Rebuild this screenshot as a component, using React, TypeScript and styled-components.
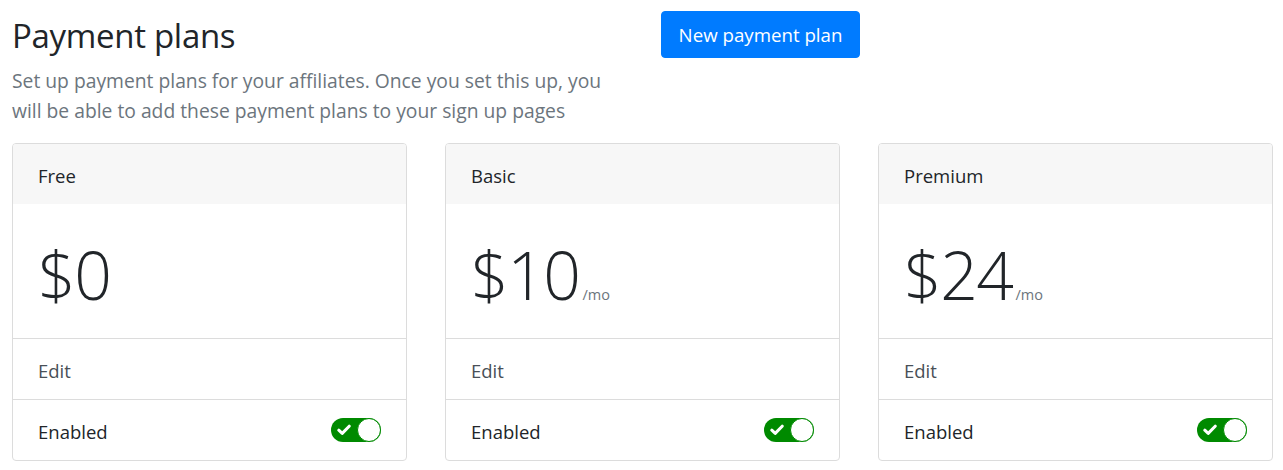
import React from "react";
import styled, { createGlobalStyle } from "styled-components";

const Global = createGlobalStyle`
  html, body { margin: 0; padding: 0; background: #fff; }
  body { font-family: "Open Sans", "Noto Sans", sans-serif; color: #212529; }
  * { box-sizing: border-box; }
`;

const Page = styled.div`
  padding: 11px 11px 0 12px;
`;

const Header = styled.div`
  display: grid;
  grid-template-columns: 629px 1fr;
  align-items: start;
`;

const Intro = styled.div``;

const Title = styled.h1`
  margin: 3px 0 9px;
  font-size: 33px;
  font-weight: 400;
  line-height: 43px;
  color: #212529;
  letter-spacing: -0.3px;
`;

const Lead = styled.p`
  margin: 0;
  font-size: 19.3px;
  line-height: 30px;
  color: #6c757d;
  max-width: 605px;
`;

const Actions = styled.div`
  padding-left: 20px;
`;

const PrimaryButton = styled.button`
  font-family: inherit;
  font-size: 18.7px;
  line-height: 29px;
  padding: 0;
  white-space: nowrap;
  width: 199px;
  height: 47px;
  color: #fff;
  background: #007bff;
  border: 1px solid #007bff;
  border-radius: 4px;
  cursor: pointer;
`;

const Cards = styled.div`
  margin-top: 17px;
  display: grid;
  grid-template-columns: repeat(3, 395px);
  column-gap: 38px;
`;

const Card = styled.div`
  border: 1px solid #dcdcdc;
  border-radius: 4px;
  overflow: hidden;
  background: #fff;
`;

const CardHeader = styled.div`
  height: 60px;
  display: flex;
  align-items: center;
  padding: 2px 25px 0;
  background: #f7f7f7;
  font-size: 18.5px;
  color: #212529;
`;

const PriceArea = styled.div`
  height: 135px;
  display: flex;
  align-items: center;
  padding: 0 25px 0 25px;
  border-bottom: 1px solid #dcdcdc;
`;

const Price = styled.span`
  font-family: "Open Sans", sans-serif;
  font-weight: 300;
  font-size: 66px;
  line-height: 1;
  color: #212529;
  letter-spacing: -1.5px;
  display: inline-flex;
  align-items: baseline;
  margin-top: 6px;
`;

const Period = styled.span`
  font-size: 14.5px;
  font-weight: 400;
  color: #6c757d;
  margin-left: 3px;
  letter-spacing: 0;
`;

const Row = styled.div<{ $last?: boolean }>`
  height: ${(p) => (p.$last ? 60 : 61)}px;
  display: flex;
  align-items: center;
  justify-content: space-between;
  padding: 2px 25px 0 25px;
  font-size: 18.5px;
  color: ${(p) => (p.$last ? "#212529" : "#495057")};
  border-bottom: ${(p) => (p.$last ? "none" : "1px solid #dcdcdc")};
`;

const Switch = styled.span`
  position: relative;
  width: 50px;
  height: 24px;
  border-radius: 12px;
  background: #008a00;
  display: inline-flex;
  align-items: center;
  margin-bottom: 2px;
`;

const Knob = styled.span`
  position: absolute;
  right: 0;
  top: 0;
  width: 24px;
  height: 24px;
  border-radius: 50%;
  background: #fff;
  border: 1.5px solid #008a00;
`;

const Check = styled.svg`
  position: absolute;
  left: 6px;
  top: 6px;
`;

const Toggle = () => (
  <Switch>
    <Check width="14" height="12" viewBox="0 0 14 12">
      <path d="M1.8 6.2 L5.2 9.4 L12.2 2.2" fill="none" stroke="#fff" strokeWidth="3" strokeLinecap="round" strokeLinejoin="round" />
    </Check>
    <Knob />
  </Switch>
);

const plans = [
  { name: "Free", price: "$0", period: "" },
  { name: "Basic", price: "$10", period: "/mo" },
  { name: "Premium", price: "$24", period: "/mo" },
];

export default function App() {
  return (
    <Page>
      <Global />
      <Header>
        <Intro>
          <Title>Payment plans</Title>
          <Lead>
            Set up payment plans for your affiliates. Once you set this up, you will be able to add these payment plans to your sign up pages
          </Lead>
        </Intro>
        <Actions>
          <PrimaryButton>New payment plan</PrimaryButton>
        </Actions>
      </Header>
      <Cards>
        {plans.map((p) => (
          <Card key={p.name}>
            <CardHeader>{p.name}</CardHeader>
            <PriceArea>
              <Price>
                {p.price}
                {p.period && <Period>{p.period}</Period>}
              </Price>
            </PriceArea>
            <Row>Edit</Row>
            <Row $last>
              Enabled
              <Toggle />
            </Row>
          </Card>
        ))}
      </Cards>
    </Page>
  );
}
